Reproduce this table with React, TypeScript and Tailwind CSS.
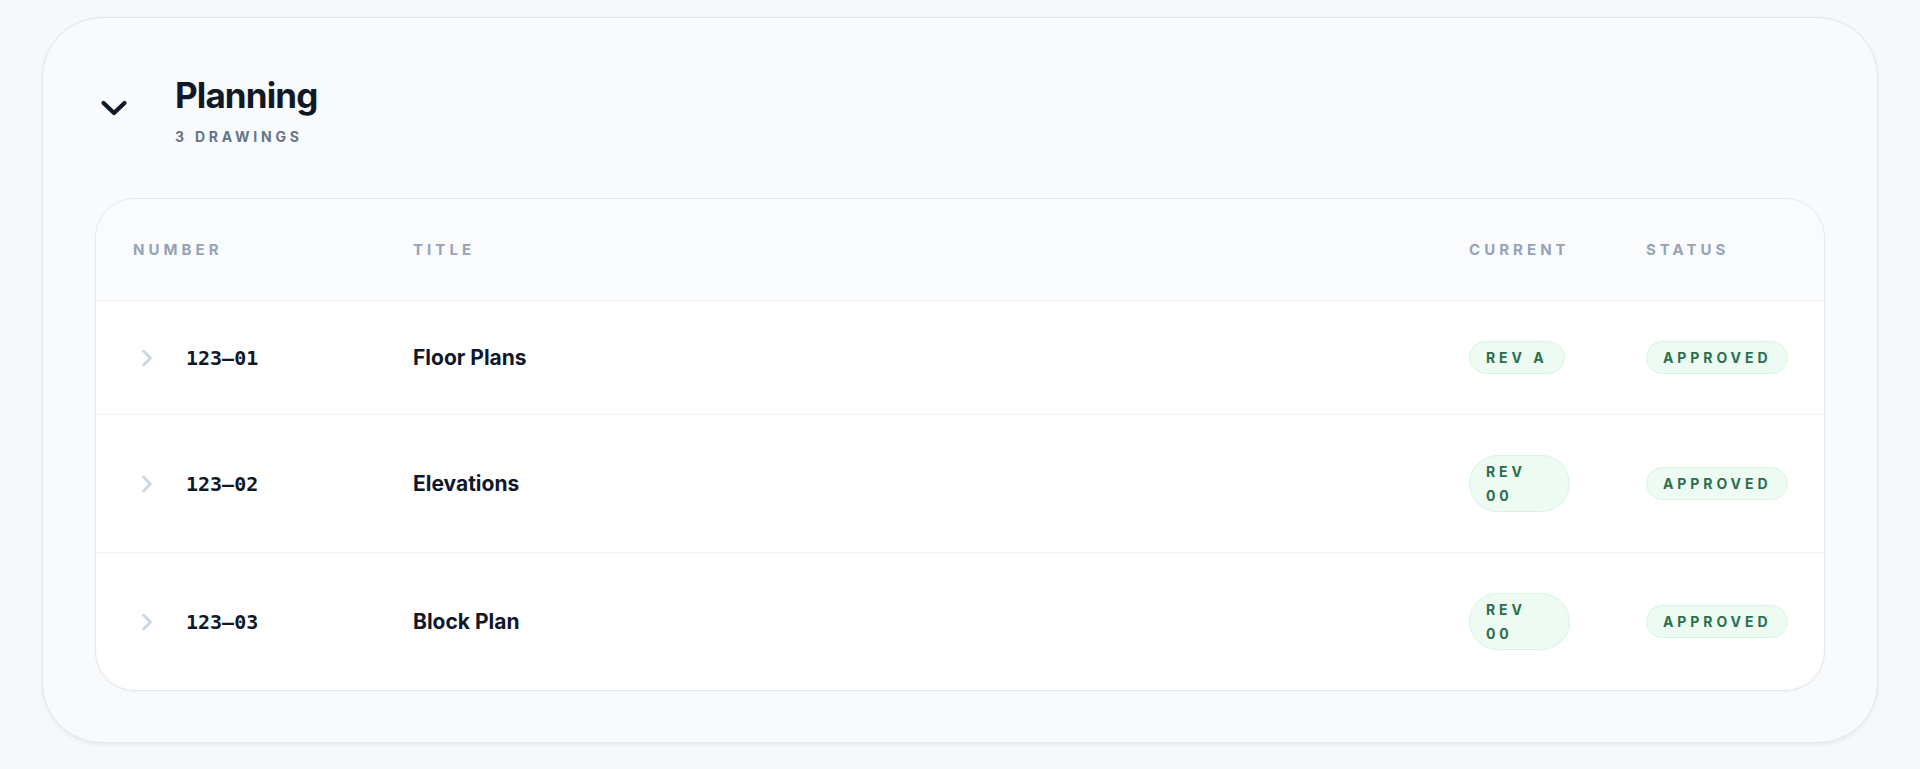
import { ChevronRight } from 'lucide-react';

interface Drawing {
  number: string;
  title: string;
  rev: string;
  status: string;
}

const drawings: Drawing[] = [
  { number: '123–01', title: 'Floor Plans', rev: 'REV A', status: 'APPROVED' },
  { number: '123–02', title: 'Elevations', rev: 'REV 00', status: 'APPROVED' },
  { number: '123–03', title: 'Block Plan', rev: 'REV 00', status: 'APPROVED' },
];

const sans = "font-['Inter','Liberation_Sans',sans-serif]";

function Pill({ children }: { children: string }) {
  return (
    <span className="inline-block rounded-full border border-[#d9f4e5] bg-[#edfbf3] px-4 py-[3.5px] text-[14px] font-bold leading-6 tracking-[0.28em] text-[#2b6e4f]">
      {children}
    </span>
  );
}

function Row({ d, first }: { d: Drawing; first: boolean }) {
  return (
    <div
      className={`grid grid-cols-[280px_1fr_177px_140px] items-center py-10 pl-[37px] pr-[38px] ${
        first ? '' : 'border-t border-[#f1f3f6]'
      }`}
    >
      <div className="flex items-center gap-[25px]">
        <ChevronRight size={28} strokeWidth={2.2} className="text-[#cbd5e1]" />
        <span className="font-['DejaVu_Sans_Mono',monospace] text-[20px] font-bold text-[#111827]">
          {d.number}
        </span>
      </div>
      <div className="text-[21px] font-bold text-[#0f172a]">{d.title}</div>
      <div className="w-[101px]">
        <Pill>{d.rev}</Pill>
      </div>
      <div>
        <Pill>{d.status}</Pill>
      </div>
    </div>
  );
}

export default function App() {
  return (
    <div className={`min-h-screen bg-[#f6f8fa] px-[42px] pt-[17px] pb-[26px] ${sans}`}>
      <div className="rounded-[60px] border border-[#e3e7eb] bg-[#f9fafb] px-[52px] pt-[57px] pb-[51px] shadow-[0_2px_4px_rgba(15,23,42,0.06)]">
        {/* section header */}
        <div className="flex items-start">
          <svg
            width="28"
            height="18"
            viewBox="0 0 28 18"
            className="ml-[5px] mt-[24px] text-[#111827]"
            fill="none"
            stroke="currentColor"
            strokeWidth="4.2"
            strokeLinecap="round"
            strokeLinejoin="round"
          >
            <polyline points="3.5,4 14,14 24.5,4" />
          </svg>
          <div className="ml-[47px]">
            <h2 className="text-[35px] font-bold leading-[40px] tracking-tight text-[#111827]">
              Planning
            </h2>
            <p className="mt-3 text-[14px] font-bold leading-5 tracking-[0.27em] text-[#64748b]">
              3 DRAWINGS
            </p>
          </div>
        </div>

        {/* drawings table */}
        <div className="mt-[51px] overflow-hidden rounded-[40px] border border-[#e2e8f0] bg-white shadow-[0_1px_3px_rgba(15,23,42,0.04)]">
          <div className="grid grid-cols-[280px_1fr_177px_140px] border-b border-[#eef1f4] bg-[#fafbfc] pt-[41px] pb-10 pl-[37px] pr-[38px] text-[15px] font-bold leading-5 tracking-[0.27em] text-[#94a3b8]">
            <div>NUMBER</div>
            <div>TITLE</div>
            <div>CURRENT</div>
            <div>STATUS</div>
          </div>
          {drawings.map((d, i) => (
            <Row key={d.number} d={d} first={i === 0} />
          ))}
        </div>
      </div>
    </div>
  );
}
